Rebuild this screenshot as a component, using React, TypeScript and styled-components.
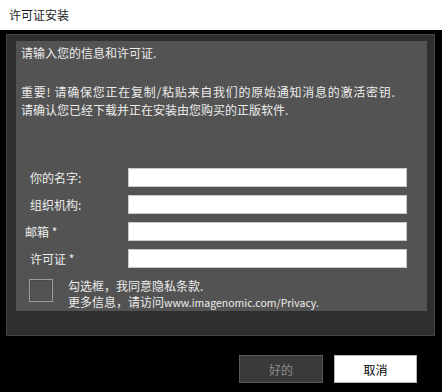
import React from "react";
import styled, { createGlobalStyle } from "styled-components";

const GlobalStyle = createGlobalStyle`
  html, body {
    margin: 0;
    padding: 0;
    background: #000;
  }
  * { box-sizing: border-box; }
`;

const FONT = `"Noto Sans CJK SC", "Noto Sans", sans-serif`;

const Window = styled.div`
  width: 442px;
  height: 392px;
  background: #000;
  font-family: ${FONT};
  font-size: 12px;
  display: flex;
  flex-direction: column;
  overflow: hidden;
`;

const TitleBar = styled.div`
  height: 30px;
  flex: none;
  background: #fff;
  color: #1c1c1c;
  padding-left: 9px;
  display: flex;
  align-items: center;
  line-height: 16px;
`;

const Content = styled.div`
  padding: 4px 7px 0 6px;
  display: flex;
  flex-direction: column;
`;

const OuterPanel = styled.div`
  width: 429px;
  height: 302px;
  background: #2f2f2f;
  border: 1px solid #454545;
  padding: 6px 7px 0 9px;
`;

const InnerPanel = styled.div`
  height: 270px;
  background: #535353;
  padding: 3px 0 0 0;
  color: #ececec;
  display: flex;
  flex-direction: column;
`;

const TextLine = styled.div<{ $spacing?: number }>`
  line-height: 18px;
  padding-left: 5px;
  white-space: nowrap;
  letter-spacing: ${(p) => p.$spacing ?? 0}px;
`;

const Notice = styled.div`
  margin-top: 21px;
`;

const Form = styled.div`
  margin-top: 49px;
  display: flex;
  flex-direction: column;
  gap: 8px;
`;

const Row = styled.div`
  display: grid;
  grid-template-columns: 112px 279px;
  align-items: center;
  height: 19px;
`;

const Label = styled.label<{ $indent: number }>`
  padding-left: ${(p) => p.$indent}px;
  line-height: 16px;
  white-space: nowrap;
  color: #ececec;
`;

const Field = styled.input`
  height: 19px;
  width: 279px;
  border: 1px solid #c9c9c9;
  background: #fff;
  margin: 0;
  padding: 0 3px;
  outline: none;
  font-family: ${FONT};
  font-size: 12px;
`;

const Consent = styled.div`
  margin-top: 11px;
  display: flex;
  align-items: flex-start;
  padding-left: 13px;
  gap: 15px;
`;

const CheckBox = styled.div`
  width: 24px;
  height: 23px;
  border: 1px solid #9c9c9c;
  box-shadow: inset 0 0 0 1px #4a4a4a;
  flex: none;
`;

const ConsentText = styled.div`
  margin-top: -1px;
  line-height: 16px;
  white-space: nowrap;
`;

const Url = styled.span`
  font-size: 10.5px;
`;

const ButtonRow = styled.div`
  margin-top: 19px;
  display: flex;
  justify-content: flex-end;
  gap: 11px;
  padding-right: 18px;
`;

const Button = styled.button<{ $primary?: boolean }>`
  width: ${(p) => (p.$primary ? 83 : 84)}px;
  height: 28px;
  margin: 0;
  padding: 0;
  font-family: ${FONT};
  font-size: 12px;
  border: 1px solid ${(p) => (p.$primary ? "#b5b5b5" : "#5a5a5a")};
  background: ${(p) => (p.$primary ? "#fff" : "#3a3a3a")};
  color: ${(p) => (p.$primary ? "#000" : "#8c8c8c")};
  display: flex;
  align-items: center;
  justify-content: center;
`;

const fields = [
  { label: "你的名字:", indent: 14 },
  { label: "组织机构:", indent: 14 },
  { label: "邮箱 *", indent: 9 },
  { label: "许可证 *", indent: 14 },
];

export default function App() {
  return (
    <>
      <GlobalStyle />
      <Window>
        <TitleBar>许可证安装</TitleBar>
        <Content>
          <OuterPanel>
            <InnerPanel>
              <TextLine>请输入您的信息和许可证.</TextLine>
              <Notice>
                <TextLine $spacing={0.75}>重要! 请确保您正在复制/粘贴来自我们的原始通知消息的激活密钥.</TextLine>
                <TextLine>请确认您已经下载并正在安装由您购买的正版软件.</TextLine>
              </Notice>
              <Form>
                {fields.map((f) => (
                  <Row key={f.label}>
                    <Label $indent={f.indent}>{f.label}</Label>
                    <Field type="text" />
                  </Row>
                ))}
              </Form>
              <Consent>
                <CheckBox />
                <ConsentText>
                  <div>勾选框，我同意隐私条款.</div>
                  <div>
                    更多信息，请访问<Url>www.imagenomic.com/Privacy.</Url>
                  </div>
                </ConsentText>
              </Consent>
            </InnerPanel>
          </OuterPanel>
          <ButtonRow>
            <Button>好的</Button>
            <Button $primary>取消</Button>
          </ButtonRow>
        </Content>
      </Window>
    </>
  );
}
